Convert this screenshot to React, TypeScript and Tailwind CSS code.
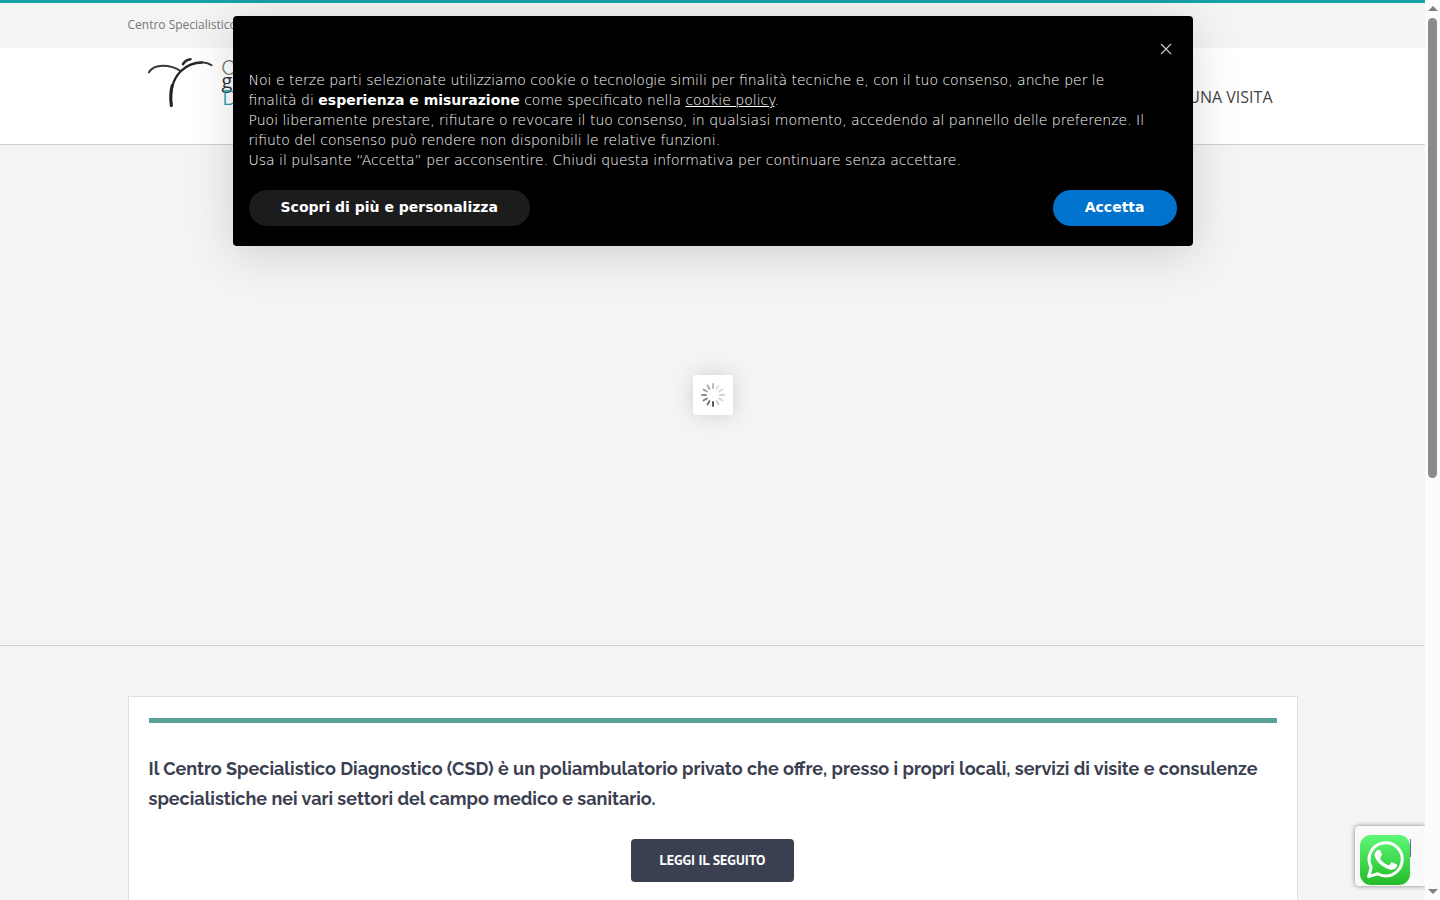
const SPOKES = [
  { angle: 0, tone: "#b5b5b5" },
  { angle: 30, tone: "#dedede" },
  { angle: 60, tone: "#d8d8d8" },
  { angle: 90, tone: "#d0d0d0" },
  { angle: 120, tone: "#d4d4d4" },
  { angle: 150, tone: "#cccccc" },
  { angle: 180, tone: "#4a4a4a" },
  { angle: 210, tone: "#6a6a6a" },
  { angle: 240, tone: "#7c7c7c" },
  { angle: 270, tone: "#8a8a8a" },
  { angle: 300, tone: "#9c9c9c" },
  { angle: 330, tone: "#a8a8a8" },
];

function Spinner() {
  return (
    <div
      role="status"
      aria-label="Caricamento"
      className="flex size-10 items-center justify-center rounded-[3px] bg-white shadow-[0_0_20px_rgba(0,0,0,0.15)]"
    >
      <svg viewBox="-12 -12 24 24" className="size-6" aria-hidden="true">
        {SPOKES.map(({ angle, tone }) => (
          <line
            key={angle}
            y1="-7"
            y2="-11"
            stroke={tone}
            strokeWidth="1.8"
            strokeLinecap="round"
            transform={`rotate(${angle})`}
          />
        ))}
      </svg>
    </div>
  );
}

function Logo() {
  return (
    <a href="#" className="flex items-start pl-5 pt-2" aria-label="Centro Specialistico Diagnostico">
      <svg viewBox="148 56 68 54" className="h-[54px] w-[68px]" fill="none" strokeLinecap="round" aria-hidden="true">
        <path d="M148.9 72.3C152 67.5 157 65.8 162.500 65.8C170 65.8 176 67.800 181 71.3" stroke="#383838" strokeWidth="2" />
        <path d="M171.3 105.5C169.6 91 172 80 181 71C187 65.2 194 62.5 202 62.5" stroke="#232323" strokeWidth="2.3" />
        <path d="M195 63.2C201.5 61.7 207.5 62.3 211.6 65.3" stroke="#303030" strokeWidth="1.9" />
        <path d="M171.3 105.5C170.3 97 170.7 91 172.2 85.5" stroke="#232323" strokeWidth="3" />
        <path d="M183 64.2C184.6 61.3 187 59.8 190.400 59.3" stroke="#262626" strokeWidth="2.6" />
      </svg>
      <span className="flex flex-col pl-[6px] font-['Raleway','Lato',sans-serif] text-xl" aria-hidden="true">
        <span className="pt-[5px] leading-[14px] text-[#777777]">C</span>
        <span className="font-['Open_Sans',sans-serif] leading-3 text-[#333333]">g</span>
        <span className="pl-px leading-[22px] text-[#17a2a8]">D</span>
      </span>
    </a>
  );
}

function CookieNotice() {
  return (
    <section
      role="dialog"
      aria-label="Informativa"
      className="absolute inset-x-4 top-4 z-20 mx-auto flex max-w-[960px] flex-col rounded bg-black px-4 pb-5 pt-[22px] font-['DejaVu_Sans',sans-serif] text-sm text-white shadow-[0_8px_48px_rgba(0,0,0,0.15)]"
    >
      <button type="button" aria-label="Chiudi" className="self-end p-[5px]">
        <svg viewBox="0 0 12 12" className="size-3" stroke="#cccccc" strokeWidth="1.1" aria-hidden="true">
          <path d="M1 1L11 11M11 1L1 11" />
        </svg>
      </button>
      <div className="pb-5 pr-6 pt-[10px] font-extralight leading-5">
        <p>
          Noi e terze parti selezionate utilizziamo cookie o tecnologie simili per finalità tecniche e, con il tuo
          consenso, anche per le finalità di <strong className="font-bold">esperienza e misurazione</strong> come
          specificato nella{" "}
          <a href="#" className="underline">
            cookie policy
          </a>
          .
        </p>
        <p>
          Puoi liberamente prestare, rifiutare o revocare il tuo consenso, in qualsiasi momento, accedendo al pannello
          delle preferenze. Il rifiuto del consenso può rendere non disponibili le relative funzioni.
        </p>
        <p>Usa il pulsante “Accetta” per acconsentire. Chiudi questa informativa per continuare senza accettare.</p>
      </div>
      <div className="flex justify-between font-bold">
        <button type="button" className="h-9 rounded-full bg-[#1c1c1c] px-8 pb-[2px]">
          Scopri di più e personalizza
        </button>
        <button type="button" className="h-9 rounded-full bg-[#0073ce] px-8 pb-[2px]">
          Accetta
        </button>
      </div>
    </section>
  );
}

function WhatsAppBadge() {
  return (
    <div className="absolute bottom-[14px] right-0 z-10 flex h-[60px] w-[70px] items-end rounded-l-sm bg-[#f9f9f9] pb-px pl-[5px] shadow-[0_0_5px_gray]">
      <a href="#" aria-label="WhatsApp">
        <svg viewBox="0 0 50 50" className="size-[50px]" aria-hidden="true">
          <defs>
            <linearGradient id="wa" x1="0" y1="0" x2="0" y2="1">
              <stop offset="0" stopColor="#5df877" />
              <stop offset="1" stopColor="#25bb28" />
            </linearGradient>
          </defs>
          <rect width="50" height="50" rx="11" fill="url(#wa)" />
          <path
            d="M8.6 41.6L11.2 32.4A16.6 16.6 0 1 1 17.6 38.8Z"
            fill="none"
            stroke="#ffffff"
            strokeWidth="3"
            strokeLinejoin="round"
          />
          <path
            d="M19.2 16.2C19.9 16.2 20.5 16.3 20.9 17.3L22.5 21.1C22.8 21.9 22.1 22.6 20.8 24.2C20.5 24.6 20.6 24.9 20.8 25.3C22.8 28.5 25.3 30.4 28.6 31.7C29.1 31.9 29.5 31.8 29.8 31.4L31.6 29.2C32 28.7 32.4 28.6 33 28.9L37 30.8C37.7 31.2 37.7 31.6 37.5 32.4C36.9 35 34.3 36.3 32 36.2C26.5 35.9 17.1 29.6 15.3 22.8C14.6 20 16.4 16.8 19.2 16.2Z"
            transform="translate(-0.5 -1.500)"
            fill="#ffffff"
          />
        </svg>
      </a>
      <span className="mb-7 h-[18px] w-px self-end bg-[#5c6fa8]" />
    </div>
  );
}

function ScrollTrack() {
  return (
    <div className="flex w-[15px] shrink-0 flex-col items-center justify-between bg-[#fcfcfc] py-[6px]" aria-hidden="true">
      <svg viewBox="0 0 10 5" className="h-[5px] w-[10px]" fill="#7f7f7f">
        <path d="M0 5L5 0L10 5Z" />
      </svg>
      <div className="flex w-full flex-1 flex-col items-center pb-1 pt-[7px]">
        <div className="h-[53%] w-[9px] rounded-full bg-[#8b8b8b]" />
      </div>
      <svg viewBox="0 0 10 5" className="h-[5px] w-[10px]" fill="#7f7f7f">
        <path d="M0 0L5 5L10 0Z" />
      </svg>
    </div>
  );
}

export default function App() {
  return (
    <div className="flex h-screen overflow-hidden bg-[#f4f4f4] font-['Open_Sans',sans-serif]">
      <div className="relative min-w-0 flex-1 overflow-hidden">
        <div className="border-t-[3px] border-[#17a2a8]">
          <div className="mx-auto flex h-[45px] max-w-[1170px] items-center pb-[2px] text-xs text-[#777777]">
            Centro Specialistico
          </div>
        </div>
        <header className="border-b border-[#d0d0d0] bg-white">
          <div className="mx-auto flex h-24 max-w-[1170px] justify-between">
            <Logo />
            <nav className="flex items-center pr-[25px] pt-[2px]">
              <a href="#" className="text-base text-[#444444]">
                UNA VISITA
              </a>
            </nav>
          </div>
        </header>
        <section className="flex h-[501px] items-center justify-center border-b border-[#d0d0d0]">
          <Spinner />
        </section>
        <main className="mx-auto mt-[50px] max-w-[1170px] border border-[#dfdfdf] bg-white px-5 pb-12 pt-[21px]">
          <div className="h-[5px] bg-[#5aa197]" />
          <h1 className="mt-[31px] font-['Raleway','Lato',sans-serif] text-lg/[30px] font-bold text-[#3b4050]">
            Il Centro Specialistico Diagnostico (CSD) è un poliambulatorio privato che offre, presso i propri locali,
            servizi di visite e consulenze specialistiche nei vari settori del campo medico e sanitario.
          </h1>
          <div className="mt-[25px] flex justify-center">
            <a
              href="#"
              className="flex h-[43px] items-center rounded-sm bg-[#3b4050] px-[29px] pb-[2px] font-['PT_Sans','Open_Sans',sans-serif] text-sm font-bold text-white"
            >
              LEGGI IL SEGUITO
            </a>
          </div>
        </main>
        <WhatsAppBadge />
        <CookieNotice />
      </div>
      <ScrollTrack />
    </div>
  );
}
